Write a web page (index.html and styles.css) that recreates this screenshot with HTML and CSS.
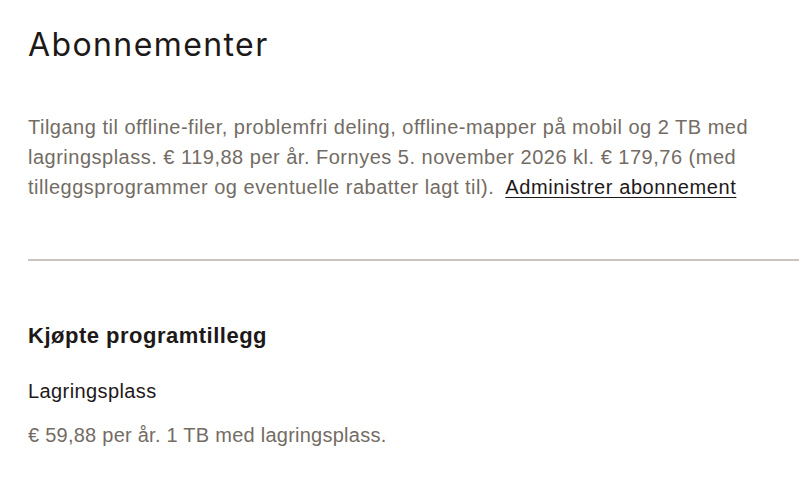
FILE: index.html
```html
<!DOCTYPE html>
<html lang="no">
<head>
<meta charset="utf-8">
<link rel="stylesheet" href="styles.css">
</head>
<body>
<main class="page">
  <section class="plan">
    <h1 class="title">Abonnementer</h1>
    <p class="desc">Tilgang til offline-filer, problemfri deling, offline-mapper på mobil og 2 TB med lagringsplass. € 119,88 per år. Fornyes 5. november 2026 kl. € 179,76 (med tilleggsprogrammer og eventuelle rabatter lagt til). <a class="link" href="#">Administrer abonnement</a></p>
  </section>
  <hr class="divider">
  <section class="addons">
    <h2 class="subtitle">Kjøpte programtillegg</h2>
    <div class="addon">
      <div class="addon-name">Lagringsplass</div>
      <div class="addon-desc">€ 59,88 per år. 1 TB med lagringsplass.</div>
    </div>
  </section>
</main>
</body>
</html>
```
FILE: styles.css
```css
html, body {
  margin: 0;
  padding: 0;
  background: #ffffff;
}
body {
  font-family: "Liberation Sans", Arial, sans-serif;
  color: #1e1919;
  overflow: hidden;
}
.page {
  padding: 0 0 0 28px;
}
.plan {
  padding-top: 23px;
  padding-right: 10px;
}
.title {
  margin: 0;
  font-family: Inter, "Liberation Sans", sans-serif;
  font-weight: 400;
  font-size: 32px;
  line-height: 44px;
  letter-spacing: 1.4px;
  color: #1e1919;
}
.desc {
  margin: 45px 0 0 0;
  font-size: 20px;
  line-height: 30px;
  letter-spacing: 0.5px;
  color: #736c64;
}
.link {
  color: #1e1919;
  text-decoration: underline;
  text-decoration-thickness: 1px;
  text-underline-offset: 3px;
  margin-left: 5px;
  letter-spacing: 0.6px;
}
.divider {
  margin: 57px 0 0 0;
  border: 0;
  border-top: 2px solid #c9c4bf;
  height: 0;
}
.addons {
  padding-top: 60px;
}
.subtitle {
  margin: 0;
  font-size: 22px;
  font-weight: 700;
  line-height: 30px;
  letter-spacing: 0.5px;
  color: #1e1919;
}
.addon {
  margin-top: 25px;
}
.addon-name {
  font-size: 20px;
  line-height: 30px;
  letter-spacing: 0.4px;
  color: #1e1919;
}
.addon-desc {
  margin-top: 14px;
  font-size: 20px;
  line-height: 30px;
  letter-spacing: 0.25px;
  color: #736c64;
}
```
